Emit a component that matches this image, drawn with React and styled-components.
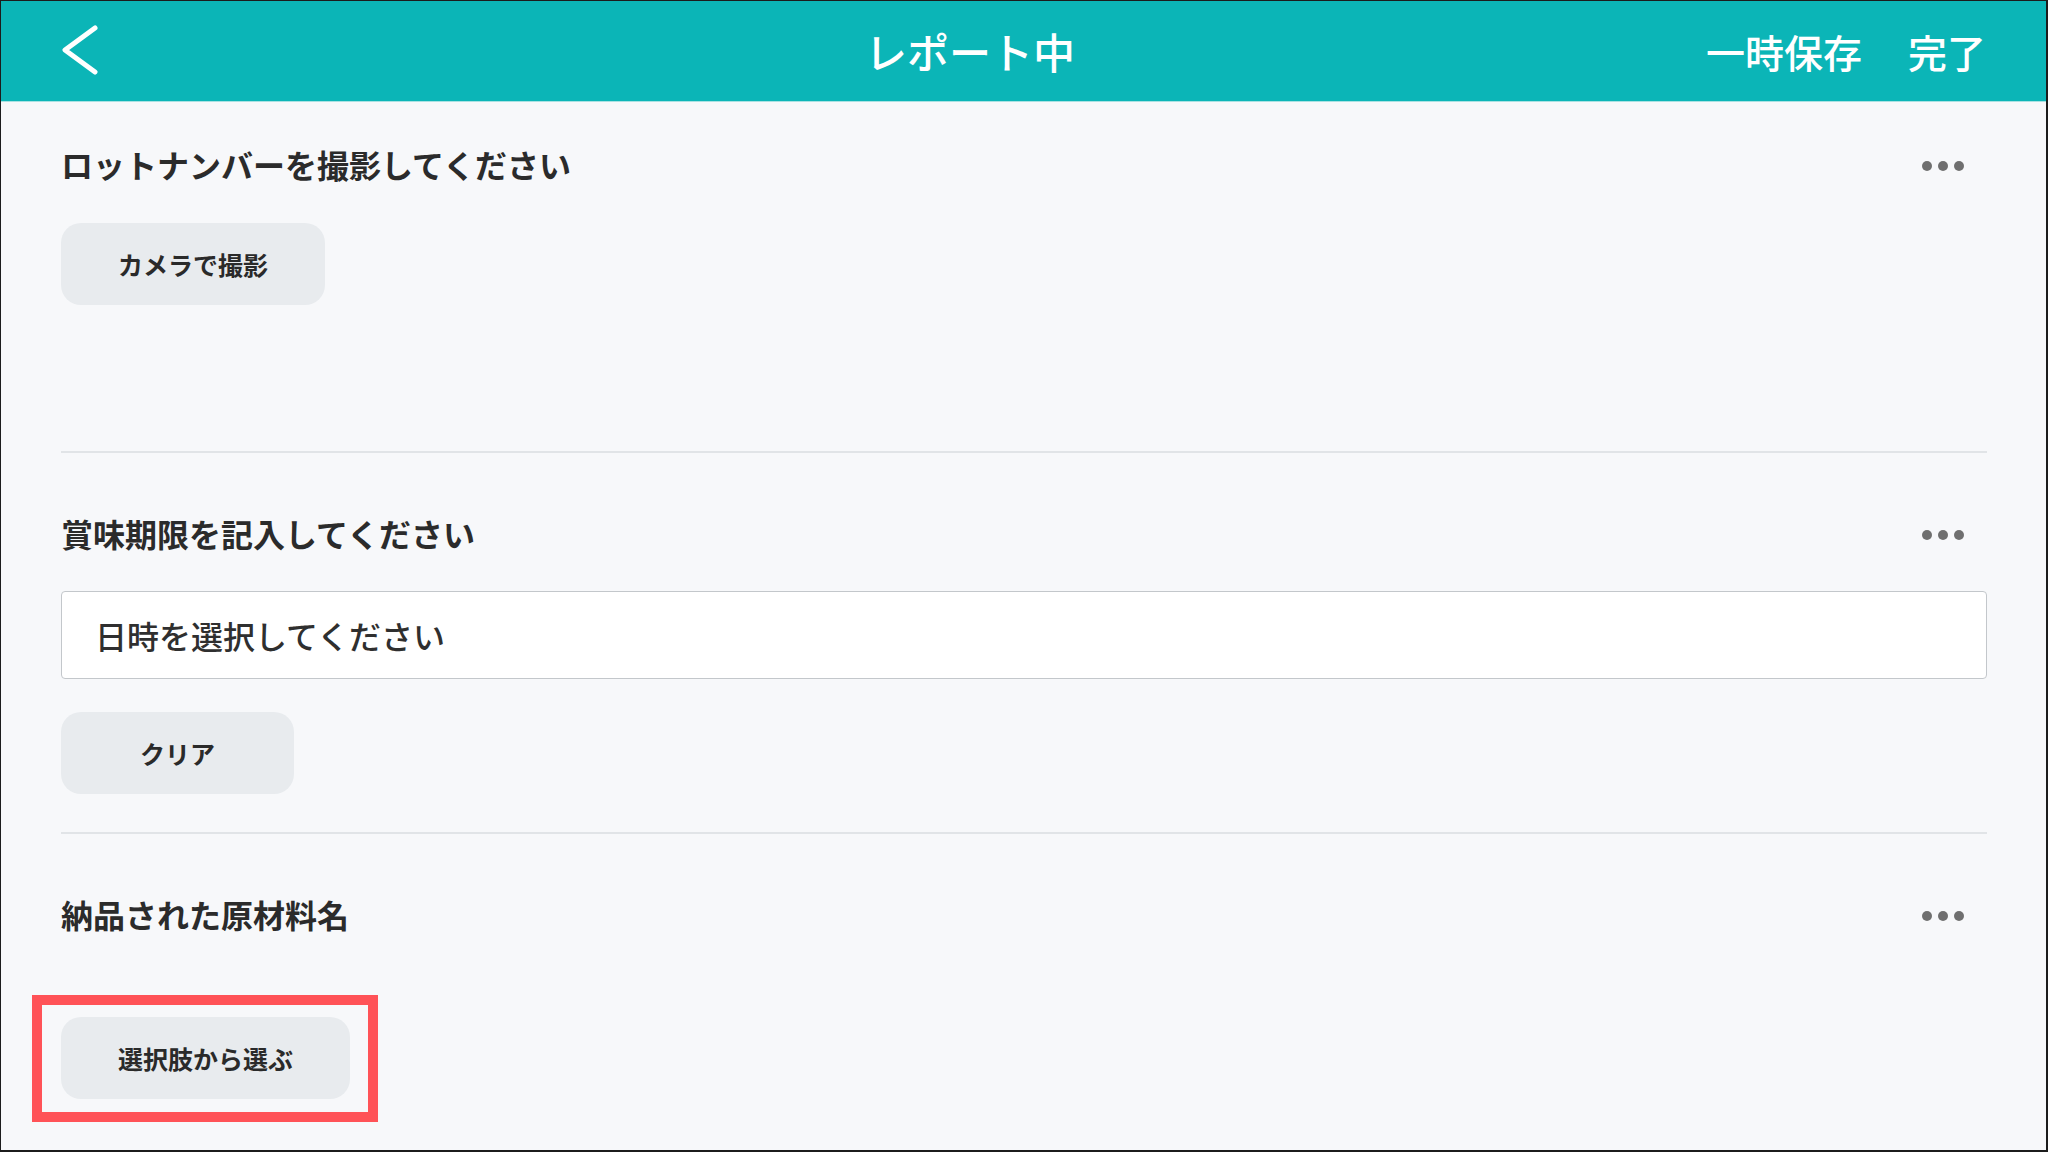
import React from "react";
import styled, { createGlobalStyle } from "styled-components";

const Global = createGlobalStyle`
  html, body { margin: 0; padding: 0; }
  body {
    font-family: "Noto Sans CJK JP", "Noto Sans", sans-serif;
    background: #f7f8fa;
  }
  * { box-sizing: border-box; }
`;

const Frame = styled.div`
  height: 100vh;
  display: flex;
  flex-direction: column;
  background: #f7f8fa;
  border-style: solid;
  border-color: #1c1c1c;
  border-width: 1px 2px 2px 1px;
  overflow: hidden;
`;

const Header = styled.header`
  flex: none;
  height: 101px;
  display: flex;
  align-items: center;
  padding: 0 60px 0 59px;
  background: #0bb5b7;
  border-bottom: 1px solid #a9e2e2;
  color: #fff;
`;

const BackSlot = styled.div`
  width: 174px;
  display: flex;
  align-items: center;
`;

const BackButton = styled.button`
  border: none;
  background: transparent;
  padding: 0;
  display: flex;
  cursor: pointer;
`;

const Title = styled.h1`
  flex: 1;
  margin: 0;
  text-align: center;
  font-size: 42px;
  font-weight: 500;
  line-height: 1;
  letter-spacing: 0;
`;

const Actions = styled.div`
  display: flex;
  align-items: center;
  gap: 46px;
`;

const HeaderAction = styled.button`
  border: none;
  background: transparent;
  padding: 0;
  color: #fff;
  font-family: inherit;
  font-size: 39px;
  font-weight: 500;
  line-height: 1;
  cursor: pointer;
`;

const Content = styled.main`
  flex: 1;
  padding: 0 59px 0 60px;
  display: flex;
  flex-direction: column;
`;

const Section = styled.section`
  display: flex;
  flex-direction: column;
  padding: ${(p) => (p.$first ? "38px" : "56px")} 0 ${(p) => p.$bottom ?? 38}px;
  border-bottom: ${(p) => (p.$last ? "none" : "2px solid #e1e4e7")};
`;

const SectionHead = styled.div`
  display: flex;
  align-items: center;
  justify-content: space-between;
  height: 48px;
`;

const SectionTitle = styled.h2`
  margin: 0;
  font-size: 32px;
  font-weight: 700;
  color: #2b2b2b;
  line-height: 48px;
`;

const MoreButton = styled.button`
  border: none;
  background: transparent;
  padding: 0 23px 0 0;
  margin-top: 4px;
  display: flex;
  gap: 6px;
  cursor: pointer;
`;

const Dot = styled.span`
  width: 10px;
  height: 10px;
  border-radius: 50%;
  background: #6f6f6f;
`;

const Body = styled.div`
  display: flex;
  flex-direction: column;
  align-items: flex-start;
  gap: 33px;
  margin-top: ${(p) => p.$top || 34}px;
`;

const GrayButton = styled.button`
  height: 82px;
  min-width: 233px;
  padding: 0 57px;
  border: none;
  border-radius: 20px;
  background: #e8ebee;
  color: #2a2a2a;
  font-family: inherit;
  font-size: 25px;
  font-weight: 700;
  cursor: pointer;
`;

const DateField = styled.div`
  align-self: stretch;
  height: 88px;
  display: flex;
  align-items: center;
  padding: 0 33px;
  background: #fff;
  border: 1.5px solid #c3c7cb;
  border-radius: 4px;
  font-size: 32px;
  font-weight: 500;
  color: #2f2f2f;
`;

const Highlight = styled.div`
  margin-left: -29px;
  border: 10px solid #ff5257;
  padding: 12px 18px 13px 19px;
`;

const Chevron = () => (
  <svg width="40" height="52" viewBox="0 0 40 52" fill="none">
    <path
      d="M35 3 L5 25 L35 47"
      stroke="#fff"
      strokeWidth="5"
      strokeLinecap="round"
      strokeLinejoin="round"
    />
  </svg>
);

const More = () => (
  <MoreButton aria-label="more">
    <Dot />
    <Dot />
    <Dot />
  </MoreButton>
);

export default function App() {
  return (
    <>
      <Global />
      <Frame>
        <Header>
          <BackSlot>
            <BackButton aria-label="back">
              <Chevron />
            </BackButton>
          </BackSlot>
          <Title>レポート中</Title>
          <Actions>
            <HeaderAction>一時保存</HeaderAction>
            <HeaderAction>完了</HeaderAction>
          </Actions>
        </Header>
        <Content>
          <Section $first $bottom={146}>
            <SectionHead>
              <SectionTitle>ロットナンバーを撮影してください</SectionTitle>
              <More />
            </SectionHead>
            <Body $top={35}>
              <GrayButton>カメラで撮影</GrayButton>
            </Body>
          </Section>
          <Section>
            <SectionHead>
              <SectionTitle>賞味期限を記入してください</SectionTitle>
              <More />
            </SectionHead>
            <Body>
              <DateField>日時を選択してください</DateField>
              <GrayButton>クリア</GrayButton>
            </Body>
          </Section>
          <Section $last $bottom={0}>
            <SectionHead>
              <SectionTitle>納品された原材料名</SectionTitle>
              <More />
            </SectionHead>
            <Body $top={57}>
              <Highlight>
                <GrayButton>選択肢から選ぶ</GrayButton>
              </Highlight>
            </Body>
          </Section>
        </Content>
      </Frame>
    </>
  );
}
